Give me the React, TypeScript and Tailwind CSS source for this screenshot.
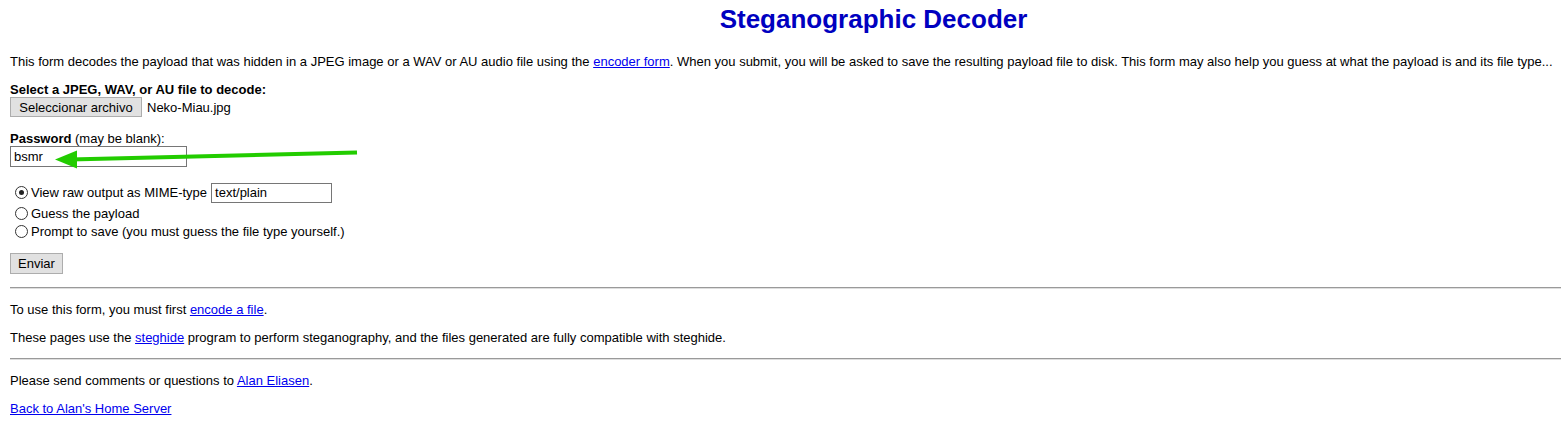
import React from "react";

const Radio = ({ checked }: { checked?: boolean }) => (
  <span className="ml-[5px] mr-[3px] flex h-[13px] w-[13px] shrink-0 items-center justify-center rounded-full border border-[#333] bg-white">
    {checked && <span className="h-[5px] w-[5px] rounded-full bg-[#222]" />}
  </span>
);

const A = ({ children }: { children: React.ReactNode }) => (
  <a href="#" className="text-[#0000ee] underline">
    {children}
  </a>
);

const Hr = () => (
  <div className="mr-[-10px] mt-[13px] h-[2px] border-t border-b border-t-[#9a9a9a] border-b-[#dedede]" />
);

export default function App() {
  return (
    <div className="relative min-h-[432px] bg-white px-[10px] font-['Liberation_Sans',Arial,sans-serif] text-[13px] leading-[15px] text-black">
      <h1 className="mt-[4px] pl-[186px] text-center text-[26px] font-bold leading-[30px] text-[#0000c0]">
        Steganographic Decoder
      </h1>

      <p className="mt-[20px] whitespace-nowrap">
        This form decodes the payload that was hidden in a JPEG image or a WAV or AU audio file using the{" "}
        <A>encoder form</A>. When you submit, you will be asked to save the resulting payload file to disk. This
        form may also help you guess at what the payload is and its file type...
      </p>

      <div className="mt-[13px] font-bold">Select a JPEG, WAV, or AU file to decode:</div>
      <div className="flex items-center">
        <span className="flex h-[20px] w-[132px] items-center justify-center border border-[#adadad] bg-[#e1e1e1]">
          Seleccionar archivo
        </span>
        <span className="ml-[5px]">Neko-Miau.jpg</span>
      </div>

      <div className="mt-[14px]">
        <b>Password</b> (may be blank):
      </div>
      <div className="flex h-[21px] w-[177px] items-center border border-[#767676] px-[3px]">bsmr</div>

      <div className="mt-[14px]">
        <div className="flex h-[23px] items-center">
          <Radio checked />
          <span>View raw output as MIME-type</span>
          <span className="ml-[4px] flex h-[20px] w-[121px] items-center border border-[#767676] px-[3px]">
            text/plain
          </span>
        </div>
        <div className="flex h-[18px] items-center">
          <Radio />
          <span>Guess the payload</span>
        </div>
        <div className="flex h-[18px] items-center">
          <Radio />
          <span>Prompt to save (you must guess the file type yourself.)</span>
        </div>
      </div>

      <div className="mt-[13px] flex h-[21px] w-[53px] items-center justify-center border border-[#adadad] bg-[#e1e1e1]">
        Enviar
      </div>

      <Hr />

      <p className="mt-[13px]">
        To use this form, you must first <A>encode a file</A>.
      </p>
      <p className="mt-[13px]">
        These pages use the <A>steghide</A> program to perform steganography, and the files generated are fully
        compatible with steghide.
      </p>

      <Hr />

      <p className="mt-[13px]">
        Please send comments or questions to <A>Alan Eliasen</A>.
      </p>
      <p className="mt-[13px]">
        <A>Back to Alan's Home Server</A>
      </p>

      <svg className="pointer-events-none absolute left-0 top-0" width="400" height="200">
        <line x1="357" y1="148.5" x2="70" y2="155.5" stroke="#22cc00" strokeWidth="4" />
        <polygon points="55,155.5 77,146.5 77,164.5" fill="#22cc00" />
      </svg>
    </div>
  );
}
